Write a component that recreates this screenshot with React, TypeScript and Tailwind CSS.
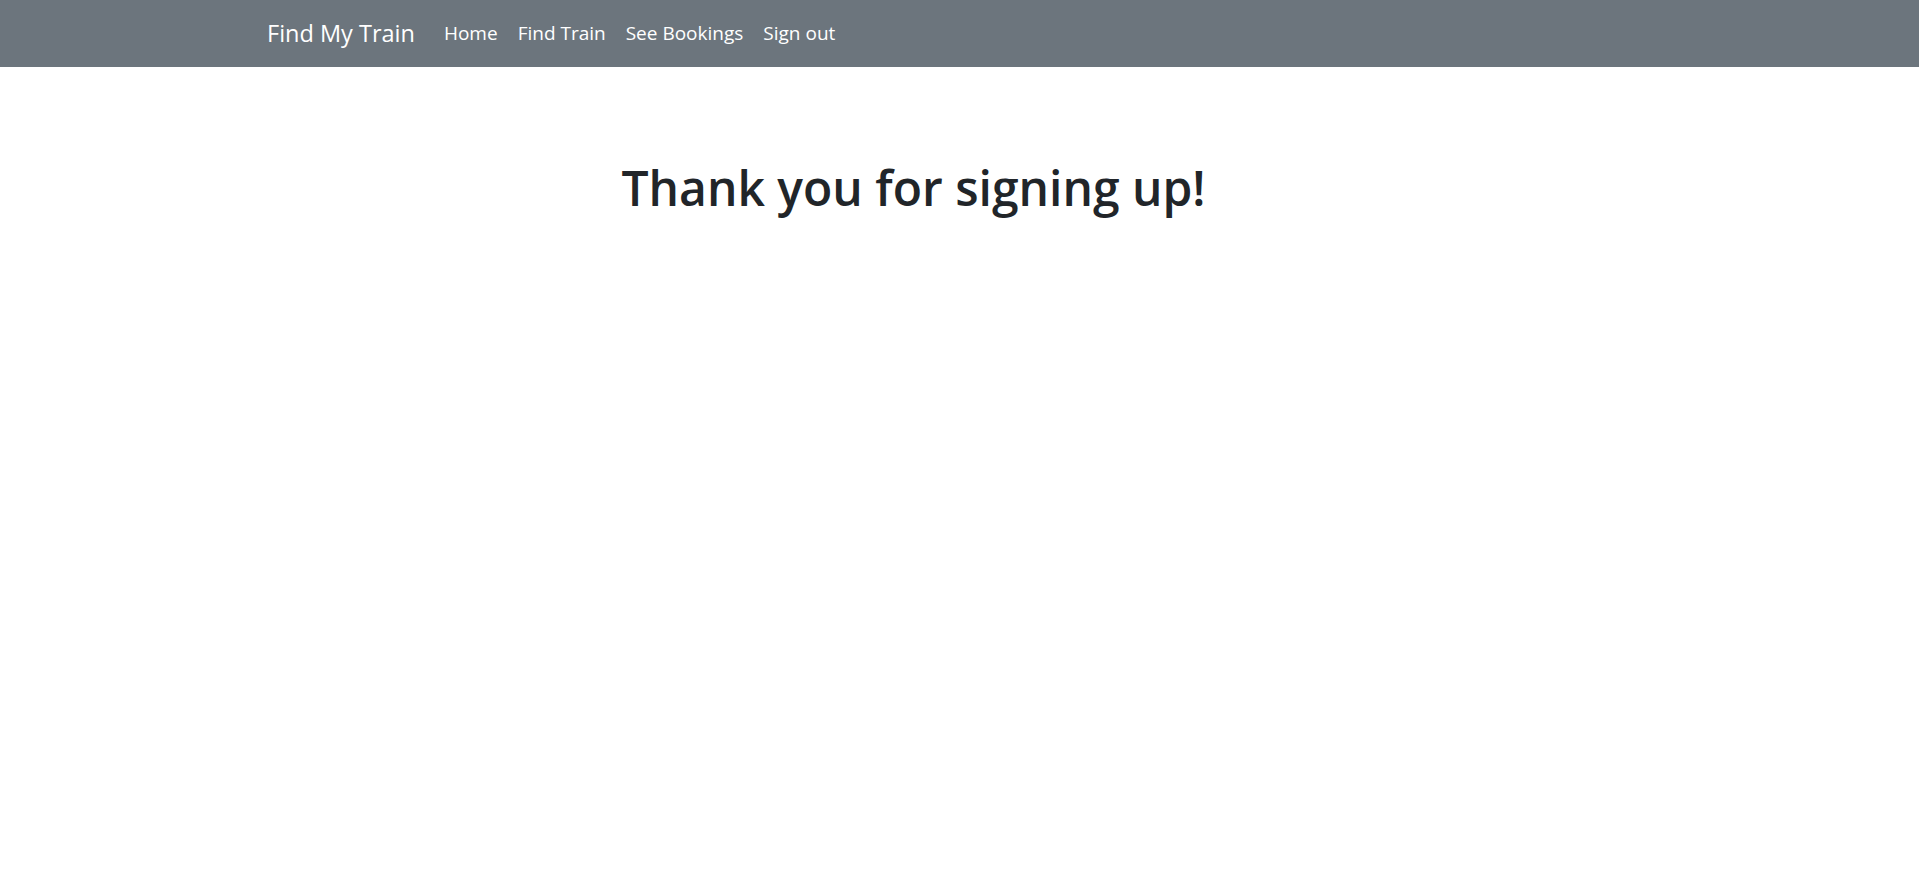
export default function App() {
  return (
    <div className="min-h-screen bg-white font-['Open_Sans',sans-serif] text-[#212529]">
      <nav className="flex h-[67px] items-center bg-[#6c757d] pl-[267px] text-white">
        <a href="#" className="mr-[29px] text-[23.5px] leading-none">
          Find My Train
        </a>
        <ul className="flex items-center gap-[20px] text-[19px] leading-none">
          <li>
            <a href="#">Home</a>
          </li>
          <li>
            <a href="#">Find Train</a>
          </li>
          <li>
            <a href="#">See Bookings</a>
          </li>
          <li>
            <a href="#">Sign out</a>
          </li>
        </ul>
      </nav>

      <main className="pt-[91px] pr-[92px] text-center">
        <h1 className="text-[48px] leading-tight font-semibold">Thank you for signing up!</h1>
      </main>
    </div>
  );
}
